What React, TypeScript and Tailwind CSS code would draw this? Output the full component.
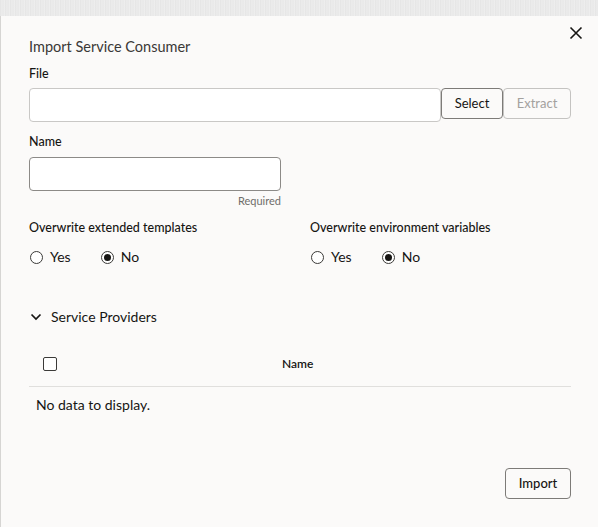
import React from "react";

const font = { fontFamily: "Lato, 'Noto Sans', sans-serif" };

const Radio: React.FC<{ label: string; checked?: boolean }> = ({ label, checked }) => (
  <label className="flex items-center gap-[7px]">
    <span className="flex h-[13px] w-[13px] items-center justify-center rounded-full border border-[#3b3a38] bg-white">
      {checked && <span className="h-[7px] w-[7px] rounded-full bg-[#161513]" />}
    </span>
    <span className="text-[14px] leading-[20px] text-[#161513]">{label}</span>
  </label>
);

const RadioGroup: React.FC<{ title: string }> = ({ title }) => (
  <div className="flex flex-col">
    <div className="text-[12.5px] font-medium leading-[16px] text-[#161513]">{title}</div>
    <div className="mt-[11px] flex h-[20px] items-center gap-[30px] pl-[1px]">
      <Radio label="Yes" />
      <Radio label="No" checked />
    </div>
  </div>
);

const App: React.FC = () => {
  return (
    <div className="flex h-[527px] w-[598px] flex-col overflow-hidden" style={font}>
      <div className="h-[16px] bg-[repeating-linear-gradient(90deg,#e4e4e4_0px,#ededed_2px,#e7e7e7_3px,#f0f0f0_5px)]" />
      <div className="relative flex flex-1 flex-col border-l border-[#d6d5d3] bg-[#fbfaf9] pl-[28px] pr-[27px] pt-[21px]">
        <button className="absolute right-[15px] top-[10px] text-[#161513]">
          <svg width="14" height="14" viewBox="0 0 14 14" fill="none" stroke="currentColor" strokeWidth="1.6">
            <path d="M1.5 1.5 L12.5 12.5 M12.5 1.5 L1.5 12.5" />
          </svg>
        </button>

        <h1 className="text-[14.5px] font-normal leading-[20px] text-[#3a3836]">Import Service Consumer</h1>

        <div className="mt-[9px] text-[12.5px] font-medium leading-[16px] text-[#161513]">File</div>
        <div className="mt-[6px] flex items-start">
          <div className="h-[34px] flex-1 rounded-[4px] border border-[#c9c8c6] bg-white" />
          <button className="h-[31px] w-[62px] rounded-[4px] border border-[#7d7b78] bg-[#fbfaf9] text-[13px] text-[#161513]">
            Select
          </button>
          <button className="h-[31px] w-[68px] rounded-[4px] border border-[#c4c3c1] bg-[#fbfaf9] text-[13px] text-[#a3a19e]">
            Extract
          </button>
        </div>

        <div className="mt-[12px] text-[12.5px] font-medium leading-[16px] text-[#161513]">Name</div>
        <div className="mt-[7px] w-[252px]">
          <div className="h-[34px] rounded-[4px] border border-[#8c8a87] bg-white" />
          <div className="mt-[3px] text-right text-[11px] leading-[14px] text-[#6f6d6a]">Required</div>
        </div>

        <div className="mt-[12px] grid grid-cols-[281px_1fr]">
          <RadioGroup title="Overwrite extended templates" />
          <RadioGroup title="Overwrite environment variables" />
        </div>

        <div className="mt-[40px] flex h-[20px] items-center gap-[9px] pl-[1px]">
          <svg width="12" height="8" viewBox="0 0 12 8" fill="none" stroke="#161513" strokeWidth="1.7">
            <path d="M1.5 1.5 L6 6 L10.5 1.5" />
          </svg>
          <span className="text-[14px] leading-[20px] text-[#161513]">Service Providers</span>
        </div>

        <div className="mt-[15px] flex h-[45px] items-center border-b border-[#e0dfdd]">
          <div className="w-[253px] pl-[14px]">
            <span className="block h-[14px] w-[14px] rounded-[2px] border border-[#3b3a38] bg-white" />
          </div>
          <span className="text-[12px] font-semibold text-[#161513]">Name</span>
        </div>
        <div className="mt-[8px] pl-[7px] text-[14px] leading-[20px] text-[#161513]">No data to display.</div>

        <div className="mt-[53px] flex justify-end">
          <button className="h-[31px] w-[66px] rounded-[4px] border border-[#7d7b78] bg-[#fbfaf9] text-[13px] font-medium text-[#161513]">
            Import
          </button>
        </div>
      </div>
    </div>
  );
};

export default App;
